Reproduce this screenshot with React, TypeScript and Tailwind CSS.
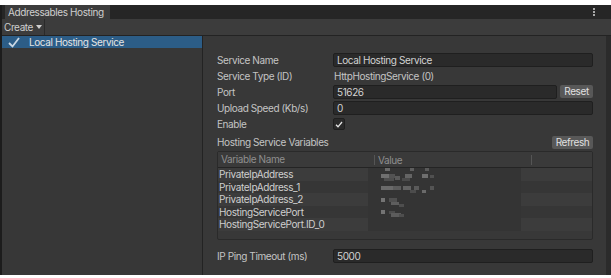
import React from 'react';

const font = { fontFamily: 'Inter, "Noto Sans", sans-serif' };

const fields = [
  { label: 'Service Name', value: 'Local Hosting Service', kind: 'input' },
  { label: 'Service Type (ID)', value: 'HttpHostingService (0)', kind: 'text' },
  { label: 'Port', value: '51626', kind: 'port' },
  { label: 'Upload Speed (Kb/s)', value: '0', kind: 'input' },
  { label: 'Enable', value: '', kind: 'check' },
];

const variables = [
  'PrivateIpAddress',
  'PrivateIpAddress_1',
  'PrivateIpAddress_2',
  'HostingServicePort',
  'HostingServicePort.ID_0',
];

// pixelated (blurred-out) values: [x, y, w, h, colour]
const blur: [number, number, number, number, string][] = [
  [13, 0, 5, 3, '#6a6a6a'], [38, 0, 4, 3, '#5e5e5e'], [53, 0, 4, 3, '#5a5a5a'],
  [9, 6, 8, 4, '#707070'], [17, 6, 6, 4, '#525252'], [23, 8, 5, 4, '#5a5a5a'], [33, 6, 7, 4, '#646464'],
  [50, 6, 6, 4, '#6e6e6e'], [58, 7, 4, 3, '#505050'], [12, 10, 10, 3, '#4e4e4e'], [30, 10, 8, 3, '#4a4a4a'],
  [9, 18, 12, 4, '#6a6a6a'], [21, 18, 8, 4, '#5c5c5c'], [31, 18, 8, 4, '#626262'], [42, 18, 5, 4, '#5a5a5a'],
  [50, 22, 4, 3, '#6a6a6a'], [58, 18, 4, 4, '#545454'], [38, 22, 6, 3, '#4c4c4c'],
  [9, 30, 4, 4, '#747474'], [17, 30, 8, 4, '#505050'], [19, 34, 8, 3, '#5e5e5e'], [27, 36, 5, 3, '#4e4e4e'],
  [9, 42, 4, 4, '#747474'], [17, 43, 6, 3, '#4c4c4c'], [19, 45, 10, 4, '#5c5c5c'], [27, 46, 5, 3, '#4e4e4e'],
];

function Field({ label, value, kind }: { label: string; value: string; kind: string }) {
  return (
    <div className="flex items-center h-[14px] mb-[2px]">
      <div className="w-[116px] shrink-0 text-[#c4c4c4]">{label}</div>
      {kind === 'input' && (
        <div className="flex-1 h-[14px] bg-[#2a2a2a] border border-[#1f1f1f] rounded-[2px] pl-[3px] leading-[12px] text-[#d2d2d2]">
          {value}
        </div>
      )}
      {kind === 'text' && <div className="flex-1 pl-[1px] text-[#c4c4c4]">{value}</div>}
      {kind === 'port' && (
        <div className="flex flex-1 gap-[3px]">
          <div className="flex-1 h-[14px] bg-[#2a2a2a] border border-[#1f1f1f] rounded-[2px] pl-[3px] leading-[12px] text-[#d2d2d2]">
            {value}
          </div>
          <div className="w-[33px] h-[13px] bg-[#585858] rounded-[2px] text-[#e0e0e0] leading-[13px] text-center">
            Reset
          </div>
        </div>
      )}
      {kind === 'check' && (
        <div className="w-[12px] h-[12px] bg-[#2a2a2a] border border-[#1f1f1f] rounded-[2px] flex items-center justify-center">
          <svg width="8" height="7" viewBox="0 0 8 7">
            <path d="M1 3.8 L3 5.8 L7 1" stroke="#e6e6e6" strokeWidth="1.3" fill="none" />
          </svg>
        </div>
      )}
    </div>
  );
}

export default function App() {
  return (
    <div
      className="w-[611px] h-[278px] bg-white pt-[5px] text-[10px] tracking-[-0.4px] whitespace-nowrap antialiased"
      style={font}
    >
      <div className="h-[270px] flex flex-col bg-[#383838] border-l-2 border-[#1c1c1c]">
        {/* tab strip */}
        <div className="h-[14px] flex bg-[#262626]">
          <div className="w-[105px] ml-[3px] bg-[#3c3c3c] pl-[3px] leading-[14px] text-[#cfcfcf]">
            Addressables Hosting
          </div>
          <div className="flex-1" />
          <div className="w-[18px] flex flex-col items-start pt-[3px] gap-[1px]">
            <span className="w-[2px] h-[2px] bg-[#a8a8a8]" />
            <span className="w-[2px] h-[2px] bg-[#a8a8a8]" />
            <span className="w-[2px] h-[2px] bg-[#a8a8a8]" />
          </div>
        </div>

        {/* toolbar */}
        <div className="h-[17px] flex bg-[#3c3c3c] border-b border-[#232323]">
          <div className="w-[43px] pl-[2px] border-r border-[#2a2a2a] leading-[16px] text-[#cfcfcf] flex items-center gap-[3px]">
            Create
            <svg width="6" height="4" viewBox="0 0 6 4">
              <path d="M0 0 H6 L3 4 Z" fill="#cfcfcf" />
            </svg>
          </div>
        </div>

        {/* body */}
        <div className="flex-1 flex">
          <div className="w-[201px] border-r border-[#232323] bg-[#373737]">
            <div className="h-[12px] bg-[#2c5d87] flex items-center text-[#e4e4e4]">
              <svg className="ml-[6px] mr-[9px]" width="12" height="11" viewBox="0 0 12 11">
                <path d="M1 6 L4.5 9.5 L11 1" stroke="#c9d7e4" strokeWidth="1.8" fill="none" />
              </svg>
              Local Hosting Service
            </div>
          </div>

          <div className="flex-1 border-r-[5px] border-[#2b2b2b] pl-[14px] pr-[13px] pt-[17px]">
            {fields.map((f) => (
              <Field key={f.label} {...f} />
            ))}

            <div className="flex items-center justify-between h-[13px] mt-[5px]">
              <div className="text-[#c4c4c4]">Hosting Service Variables</div>
              <div className="w-[41px] h-[13px] bg-[#585858] rounded-[2px] text-[#e0e0e0] leading-[13px] text-center">
                Refresh
              </div>
            </div>

            <div className="mt-[2px] h-[89px] border border-[#2a2a2a] rounded-[2px] bg-[#383838] flex flex-col">
              <div className="h-[16px] flex items-center bg-[#3a3a3a] border-b border-[#242424] text-[#8f8f8f]">
                <div className="w-[156px] pl-[3px]">Variable Name</div>
                <div className="w-[157px] border-l border-[#555] pl-[3px] leading-[10px]">Value</div>
                <div className="flex-1 h-[10px] border-l border-[#555]" />
              </div>
              <div className="relative">
                {variables.map((v, i) => (
                  <div
                    key={v}
                    className={`h-[12.5px] flex items-center text-[#cfcfcf] ${i % 2 === 0 ? 'bg-[#3c3c3c]' : 'bg-[#363636]'}`}
                  >
                    <div className="w-[150px] pl-[1px] leading-[12px]">{v}</div>
                    <div className="w-[153px] h-full bg-[#343434]" />
                    <div className="flex-1" />
                  </div>
                ))}
                <svg className="absolute left-[150px] top-0" width="153" height="62" viewBox="0 0 153 62">
                  {blur.map(([x, y, w, h, c], i) => (
                    <rect key={i} x={x + 4} y={y} width={w} height={h} fill={c} />
                  ))}
                </svg>
              </div>
            </div>

            <div className="mt-[9px]">
              <Field label="IP Ping Timeout (ms)" value="5000" kind="input" />
            </div>
          </div>
        </div>
      </div>
    </div>
  );
}
